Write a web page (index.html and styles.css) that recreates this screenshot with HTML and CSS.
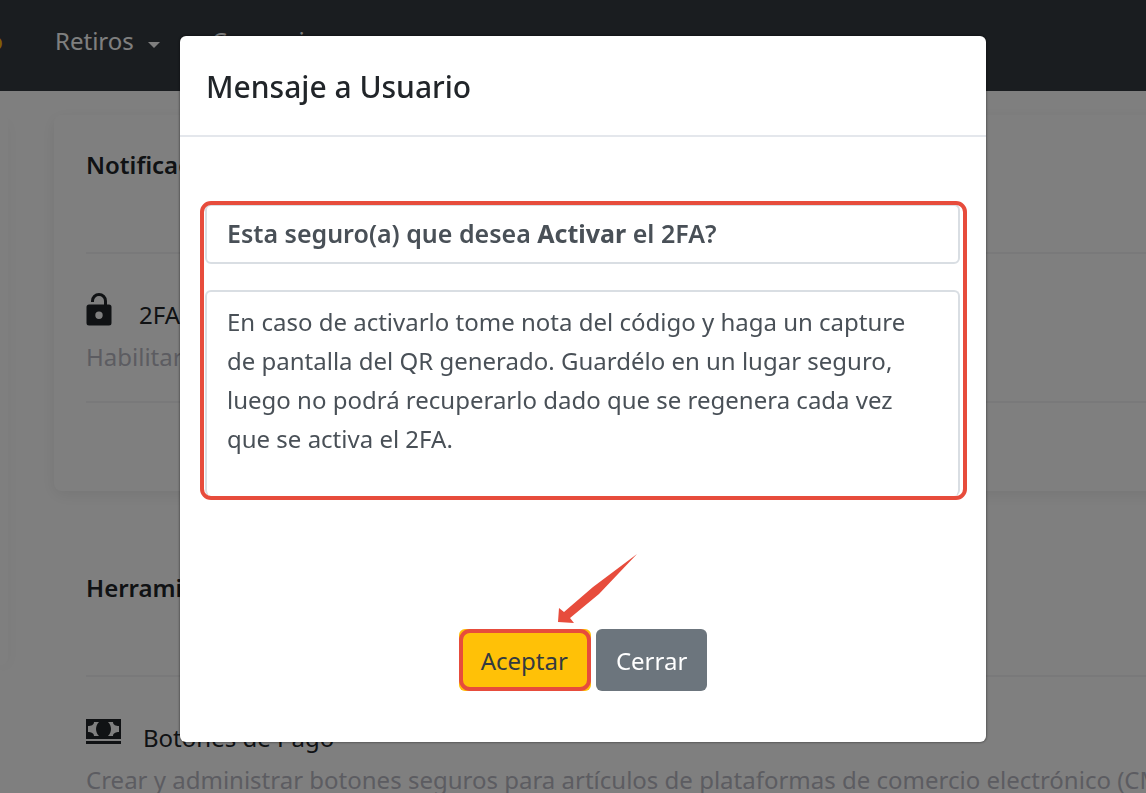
FILE: index.html
```html
<!DOCTYPE html>
<html lang="es">

<head>
    <meta charset="UTF-8" />
    <meta name="viewport" content="width=device-width,initial-scale=1.0" />
    <title>Mensaje a Usuario</title>
    <link rel="stylesheet" href="styles.css">
</head>

<body>
    <nav class="navbar">
        <a class="nav-link nav-link-first" href="#">Depósito</a>
        <a class="nav-link" href="#">Retiros <span class="caret"></span></a>
        <a class="nav-link" href="#">Comercio</a>
    </nav>
    <div class="layout">
        <aside class="sidebar"></aside>
        <main class="content">
            <section class="card shadow">
                <h2 class="card-title">Notificaciones</h2>
                <div class="option">
                    <div class="option-head">
                        <svg class="icon-lock" viewBox="0 0 26 34" aria-hidden="true">
                            <path fill="none" stroke="#212529" stroke-width="3" d="M6.500 9V8a6.500 6.500 0 0 1 13 0v5" />
                            <path fill="#212529" fill-rule="evenodd" d="M3 11.500h20a2.500 2.500 0 0 1 2.500 2.500v16a2.500 2.500 0 0 1-2.500 2.500H3A2.500 2.500 0 0 1 .5 30V14A2.500 2.500 0 0 1 3 11.500zm10 7a3.700 3.700 0 1 0 0 7.400 3.700 3.700 0 0 0 0-7.400z" />
                        </svg>
                        <span>2FA</span>
                    </div>
                    <p class="option-text">Habilitar</p>
                </div>
            </section>
            <section class="card">
                <h2 class="card-title">Herramientas</h2>
                <div class="option">
                    <div class="option-head">
                        <svg class="icon-cash" viewBox="0 0 35 26" aria-hidden="true">
                            <path fill="#212529" fill-rule="evenodd" d="M0 0h35v20H0zM8 3C8 6 5 7 2 7v6c3 0 6 1 6 4h5c-4-4-4-10 0-14zm14 0c4 4 4 10 0 14h5c0-3 3-4 6-4V7c-3 0-6-1-6-4z" />
                            <path fill="#212529" d="M0 22h35v3H0z" />
                        </svg>
                        <span>Botones de Pago</span>
                    </div>
                    <p class="option-text">Crear y administrar botones seguros para artículos de plataformas de comercio electrónico (CMS)</p>
                </div>
            </section>
        </main>
    </div>

    <div class="backdrop">
        <div class="modal" role="dialog" aria-labelledby="modal-title">
            <div class="modal-header">
                <h1 class="modal-title" id="modal-title">Mensaje a Usuario</h1>
            </div>
            <div class="modal-body">
                <div class="message">
                    <div class="box box-question">Esta seguro(a) que desea <strong>Activar</strong> el 2FA?</div>
                    <div class="box box-note">En caso de activarlo tome nota del código y haga un capture de pantalla del QR generado. Guardélo en un lugar seguro, luego no podrá recuperarlo dado que se regenera cada vez que se activa el 2FA.</div>
                </div>
            </div>
            <div class="modal-footer">
                <div class="accept">
                    <button class="btn btn-warning" type="button">Aceptar</button>
                    <svg class="arrow" viewBox="0 0 80 70" aria-hidden="true">
                        <path fill="#e74c3c" d="M79 0L41 40 12 64l4 5L0 68 1 54l5 4 29-25z" />
                    </svg>
                </div>
                <button class="btn btn-secondary" type="button">Cerrar</button>
            </div>
        </div>
    </div>
</body>

</html>
```

FILE: styles.css
```css
* {
    box-sizing: border-box;
}

body {
    margin: 0;
    height: 100vh;
    overflow: hidden;
    font-family: "Noto Sans", "Open Sans", sans-serif;
    font-size: 24px;
    line-height: 39px;
    color: #212529;
    background: #fff;
}

h1,
h2,
p {
    margin: 0;
}

.navbar {
    display: flex;
    align-items: center;
    gap: 52px;
    height: 91px;
    padding-bottom: 10px;
    background: #343a40;
}

.nav-link {
    display: flex;
    align-items: center;
    gap: 14px;
    color: #fff;
    text-decoration: none;
}

.nav-link-first {
    width: 3px;
    justify-content: flex-end;
    color: #ffc107;
}

.caret {
    margin-top: 8px;
    border-top: 6px solid;
    border-left: 6px solid transparent;
    border-right: 6px solid transparent;
}

.layout {
    display: flex;
    gap: 46px;
    padding-top: 24px;
}

.sidebar {
    flex: 0 0 8px;
    height: 550px;
    border-radius: 0 8px 8px 0;
    box-shadow: 0 4px 16px rgba(0, 0, 0, 0.06);
}

.content {
    flex: 1;
    min-width: 0;
    margin-right: -60px;
}

.card {
    height: 376px;
    margin-bottom: 47px;
    padding: 30px 32px;
    border-radius: 8px;
}

.shadow {
    box-shadow: 0 4px 16px rgba(0, 0, 0, 0.08);
}

.card-title {
    padding-bottom: 68px;
    border-bottom: 2px solid #f3f3f5;
    font-size: 24px;
    font-weight: 600;
    line-height: 39px;
}

.option {
    padding-top: 39px;
    padding-bottom: 25px;
    border-bottom: 2px solid #f3f3f5;
    white-space: nowrap;
}

.option-head {
    display: flex;
    gap: 22px;
    height: 44px;
}

.option-head span {
    padding-top: 2px;
}

.icon-lock {
    width: 26px;
    height: 34px;
    margin-right: 5px;
}

.icon-cash {
    width: 35px;
    height: 26px;
    margin-top: 3px;
}

.option-text {
    color: #b9b9c3;
}

.backdrop {
    position: fixed;
    inset: 0 -20px 0 0;
    padding: 36px 26px;
    background: rgba(0, 0, 0, 0.5);
}

.modal {
    max-width: 806px;
    margin: 0 auto;
    border-radius: 6px;
    background: #fff;
    box-shadow: 0 0 2px 1px rgba(0, 0, 0, 0.3);
}

.modal-header {
    padding: 27px 26px 24px;
    border-bottom: 2px solid #e4e7ec;
}

.modal-title {
    font-size: 30px;
    font-weight: 500;
    line-height: 48px;
}

.modal-body {
    padding: 67px 26px 0 25px;
}

.message {
    position: relative;
    display: flex;
    flex-direction: column;
    gap: 26px;
    color: #495057;
}

/* red frame round both boxes */
.message::after {
    content: "";
    position: absolute;
    inset: -3px -7px -4px -5px;
    border: 4px solid #e74c3c;
    border-radius: 11px;
}

.box {
    padding: 10px 20px;
    border: 2px solid #d9dee3;
    border-radius: 6px;
}

.box-question {
    padding: 8px 20px 9px;
    font-size: 25px;
    font-weight: 600;
}

.box-question strong {
    font-weight: 700;
}

/* bottom edge runs on under the red frame */
.box-note {
    min-height: 206px;
    border-bottom: 0;
}

.modal-footer {
    display: flex;
    justify-content: center;
    gap: 5px;
    padding: 133px 26px 51px;
}

.accept {
    position: relative;
}

/* red frame over the accept button */
.accept::after {
    content: "";
    position: absolute;
    inset: 0;
    border: 4px solid #e74c3c;
    border-radius: 11px;
    pointer-events: none;
}

.btn {
    height: 62px;
    padding: 0 20px;
    border: 0;
    border-radius: 6px;
    font: inherit;
}

.btn-warning {
    padding: 0 23px 0 22px;
    background: #ffc107;
    color: #343a40;
}

.btn-secondary {
    background: #6c757d;
    color: #fff;
}

.arrow {
    position: absolute;
    left: 99px;
    bottom: 67px;
    width: 80px;
    height: 70px;
}
```
